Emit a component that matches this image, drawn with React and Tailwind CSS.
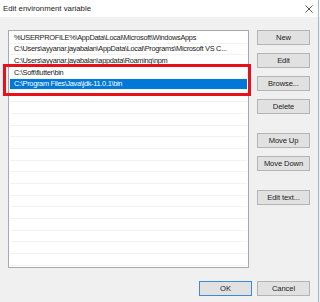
import React from "react";

const rows = [
  "%USERPROFILE%\\AppData\\Local\\Microsoft\\WindowsApps",
  "C:\\Users\\ayyanar.jayabalan\\AppData\\Local\\Programs\\Microsoft VS C...",
  "C:\\Users\\ayyanar.jayabalan\\appdata\\Roaming\\npm",
  "C:\\Soft\\flutter\\bin",
  "C:\\Program Files\\Java\\jdk-11.0.1\\bin",
];

function Btn({ children, top, def }) {
  return (
    <div
      className={`h-[15px] w-[53px] flex items-center justify-center bg-[#e1e1e1] border text-[7.6px] tracking-[-0.1px] leading-none text-[#222] ${
        def ? "border-[#3c8ad8]" : "border-[#b4b4b4]"
      }`}
      style={{ marginTop: top }}
    >
      {children}
    </div>
  );
}

export default function App() {
  const all = [...rows];
  while (all.length < 20) all.push("");
  return (
    <div
      className="w-[320px] h-[302px] bg-[#f0f0f0] flex flex-col overflow-hidden relative"
      style={{ fontFamily: '"Liberation Sans", Arial, sans-serif' }}
    >
      <div className="h-[17px] bg-white flex items-center justify-between pl-[3px] pr-[6px] shrink-0">
        <span className="text-[7.8px] text-[#222] leading-none">Edit environment variable</span>
        <svg width="8" height="8" viewBox="0 0 8 8" className="mr-[1px]">
          <path d="M0.5 0.5L7.5 7.5M7.5 0.5L0.5 7.5" stroke="#444" strokeWidth="0.9" />
        </svg>
      </div>
      <div className="flex pl-[8px] pt-[13px]">
        <div className="relative w-[241px] h-[238px] bg-white border border-[#a8a8b4] p-[1px] shrink-0">
          {all.map((r, i) => (
            <div
              key={i}
              className={`h-[11.7px] flex items-center pl-[4px] text-[7.4px] tracking-[-0.3px] leading-none whitespace-nowrap overflow-hidden border-b border-[#f2f2f2] ${
                i === 4 ? "bg-[#0078d7] text-white" : "text-[#1a1a1a]"
              }`}
            >
              {r}
            </div>
          ))}
          <div className="absolute left-[-6px] top-[33px] w-[248px] h-[32px] border-[3px] border-[#e8101a]" />
        </div>
        <div className="ml-[8px] flex flex-col">
          <Btn top={0}>New</Btn>
          <Btn top={8}>Edit</Btn>
          <Btn top={8}>Browse...</Btn>
          <Btn top={8}>Delete</Btn>
          <Btn top={19}>Move Up</Btn>
          <Btn top={8}>Move Down</Btn>
          <Btn top={19}>Edit text...</Btn>
        </div>
      </div>
      <div className="flex justify-end gap-[5px] pr-[10px] mt-[13px]">
        <Btn def>OK</Btn>
        <div className="w-[53px] h-[15px] flex items-center justify-center bg-[#e1e1e1] border border-[#b4b4b4] text-[7.6px] tracking-[-0.1px] leading-none text-[#222]">
          Cancel
        </div>
      </div>
      <div className="absolute right-[1px] top-0 w-[1px] h-full bg-[#aab4c4]" />
    </div>
  );
}
